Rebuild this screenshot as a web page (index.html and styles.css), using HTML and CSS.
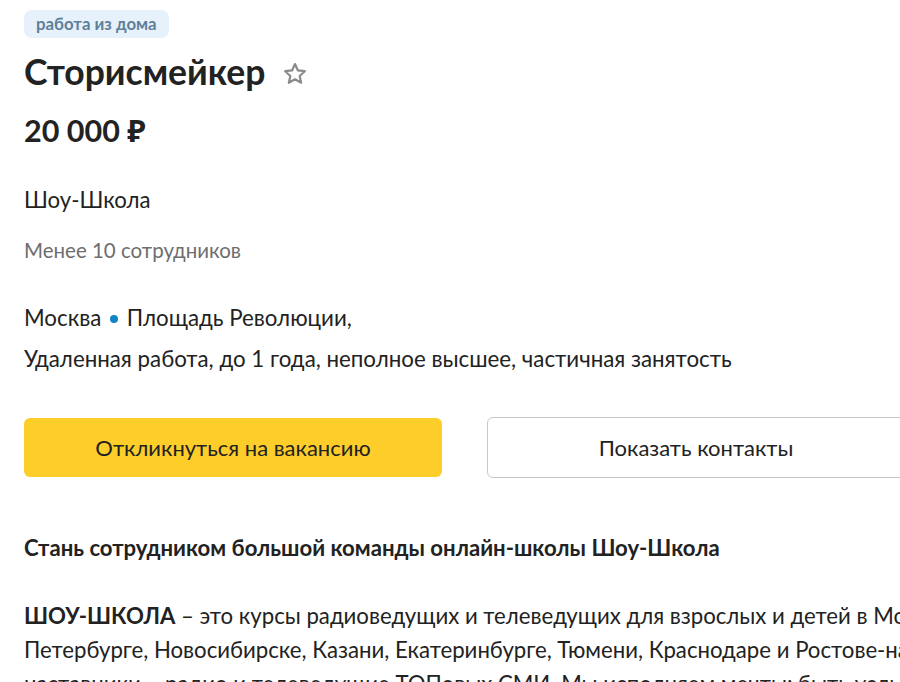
FILE: index.html
```html
<!DOCTYPE html>
<html lang="ru">
<head>
    <meta charset="UTF-8">
    <meta name="viewport" content="width=device-width, initial-scale=1.0">
    <title>Сторисмейкер</title>
    <link rel="stylesheet" href="styles.css">
</head>
<body>
    <main class="vacancy">
        <span class="tag">работа из дома</span>
        <div class="title-row">
            <h1>Сторисмейкер</h1>
            <svg class="star" width="26" height="26" viewBox="0 0 24 24">
                <path d="M12 2.8l2.7 5.9 6.4.7-4.8 4.4 1.4 6.3L12 16.9l-5.7 3.2 1.4-6.3-4.8-4.4 6.4-.7z" fill="none" stroke="#8a8a8a" stroke-width="2" stroke-linejoin="round"/>
            </svg>
        </div>
        <div class="price">20 000 ₽</div>

        <div class="company">Шоу-Школа</div>
        <div class="size">Менее 10 сотрудников</div>

        <div class="address">Москва <span class="metro"></span> Площадь Революции,</div>
        <div class="terms">Удаленная работа, до 1 года, неполное высшее, частичная занятость</div>

        <div class="actions">
            <button class="btn btn-primary">Откликнуться на вакансию</button>
            <button class="btn btn-outline">Показать контакты</button>
        </div>

        <h2 class="desc-title">Стань сотрудником большой команды онлайн-школы Шоу-Школа</h2>
        <p class="desc">
            <b>ШОУ-ШКОЛА</b> – это курсы радиоведущих и телеведущих для взрослых и детей в Москве, Санкт-Петербурге, Новосибирске, Казани, Екатеринбурге, Тюмени, Краснодаре и Ростове-на-Дону. Наши наставники – радио и телеведущие ТОПовых СМИ. Мы исполняем мечты: быть услышанным и увиденным.
        </p>
    </main>
</body>
</html>
```

FILE: styles.css
```css
html, body {
    margin: 0;
    padding: 0;
    overflow: hidden;
}
body {
    font-family: Lato, "Noto Sans", sans-serif;
    color: #222;
    background: #fff;
}
.vacancy {
    width: 1040px;
    padding: 10px 24px 0;
}
.tag {
    display: inline-block;
    background-color: #e6f1fb;
    color: #5f7f99;
    font-size: 16.8px;
    font-weight: 700;
    line-height: 28px;
    padding: 0 12px;
    border-radius: 8px;
}
.title-row {
    display: flex;
    align-items: center;
    gap: 17px;
    margin-top: 12px;
}
h1 {
    margin: 0;
    font-size: 35.5px;
    font-weight: 700;
    line-height: 44px;
}
.star {
    margin-top: 4px;
}
.price {
    margin-top: 18px;
    font-size: 30.5px;
    font-weight: 700;
    line-height: 36px;
}
.company {
    margin-top: 38px;
    font-size: 22.2px;
    line-height: 28px;
}
.size {
    margin-top: 22px;
    font-size: 20.5px;
    line-height: 28px;
    color: #6e6e6e;
}
.address {
    margin-top: 40px;
    font-size: 22.3px;
    line-height: 28px;
}
.metro {
    display: inline-block;
    width: 8px;
    height: 8px;
    border-radius: 50%;
    background-color: #0f83c7;
    vertical-align: middle;
    margin: 0 3px 3px;
}
.terms {
    margin-top: 13px;
    font-size: 22.3px;
    line-height: 28px;
}
.actions {
    display: flex;
    align-items: center;
    gap: 45px;
    margin-top: 44px;
}
.btn {
    font-family: Lato, "Noto Sans", sans-serif;
    font-size: 22px;
    color: #222;
    border-radius: 6px;
    cursor: pointer;
}
.btn-primary {
    width: 418px;
    height: 59px;
    background-color: #fdcd2a;
    border: none;
}
.btn-outline {
    width: 418px;
    height: 61px;
    background-color: #fff;
    border: 1px solid #c8c8c8;
}
.desc-title {
    margin: 56px 0 0;
    font-size: 22.15px;
    font-weight: 700;
    line-height: 28px;
}
.desc {
    margin: 37px 0 0;
    font-size: 22.2px;
    line-height: 34px;
}
.desc b {
    font-weight: 700;
}
```
